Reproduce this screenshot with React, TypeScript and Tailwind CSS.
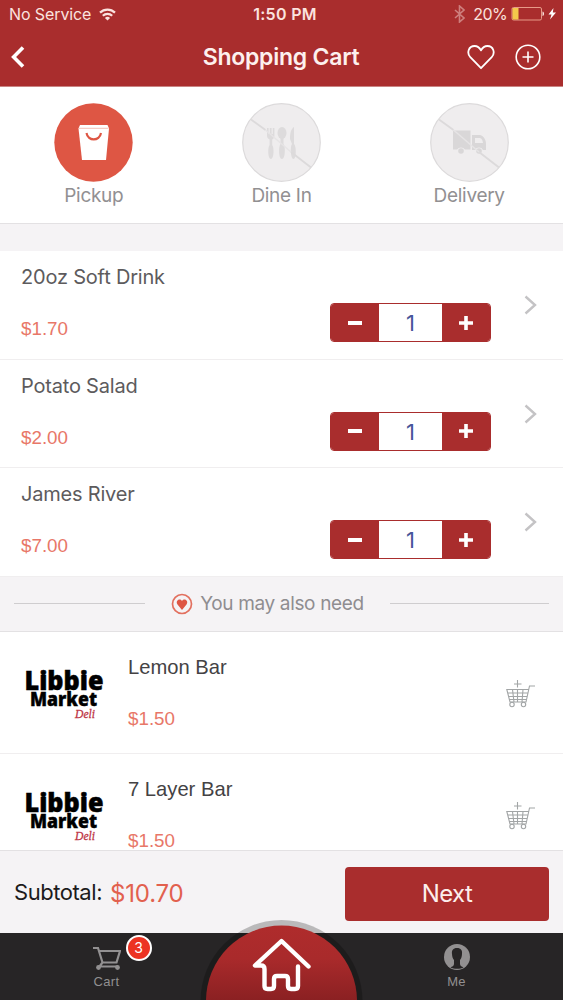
import { useState } from 'react'

const services = [
    { name: 'Pickup', enabled: true },
    { name: 'Dine In', enabled: false },
    { name: 'Delivery', enabled: false },
]

const initialItems = [
    { name: '20oz Soft Drink', price: '$1.70', qty: 1 },
    { name: 'Potato Salad', price: '$2.00', qty: 1 },
    { name: 'James River', price: '$7.00', qty: 1 },
]

const suggestions = [
    { name: 'Lemon Bar', price: '$1.50' },
    { name: '7 Layer Bar', price: '$1.50' },
]

function StatusBar() {
    return (
        <div className="grid h-7 grid-cols-3 items-center pr-1.5 pl-[9px] text-base text-[#fbe3df]">
            <div className="flex items-center gap-2">
                <span className="tracking-[-0.1px]">No Service</span>
                <svg width="17" height="13" viewBox="0 0 17 13" fill="none" stroke="currentColor" strokeWidth="2.2">
                    <path d="M1 4.6a10.8 10.8 0 0 1 15 0" />
                    <path d="M3.8 7.8a6.8 6.8 0 0 1 9.4 0" />
                    <path d="M8.5 12.6 5.9 9.9a3.8 3.8 0 0 1 5.2 0z" fill="currentColor" stroke="none" />
                </svg>
            </div>
            <span className="pl-1 text-center font-semibold tracking-[0.3px]">1:50 PM</span>
            <div className="flex items-center justify-end">
                <svg className="mr-2 opacity-45" width="11" height="18" viewBox="0 0 11 18" fill="none" stroke="currentColor" strokeWidth="1.6">
                    <path d="M1 5l9 8-4.5 4V1L10 5l-9 8" />
                </svg>
                <span className="tracking-[-0.6px]">20%</span>
                <svg className="ml-1" width="46" height="16" viewBox="0 0 46 16">
                    <rect x="1" y="1.5" width="29.5" height="12.5" rx="1.5" fill="none" stroke="#e79a88" />
                    <rect x="1.5" y="2" width="6" height="11.5" fill="#f3c94b" />
                    <path d="M31.5 5.5c2 .4 2 4.1 0 4.5z" fill="#fbe3df" />
                    <path d="M42.5 2 37.5 8.5h3L39 13.5l6-7h-3.2z" fill="#fff" />
                </svg>
            </div>
        </div>
    )
}

function Header() {
    return (
        <header className="h-[87px] shrink-0 border-b border-[#c98583] bg-[#a92d2d]">
            <StatusBar />
            <div className="flex h-[58px] items-center justify-between pr-[22px] pl-[11px]">
                <svg className="mr-[68px]" width="14" height="22" viewBox="0 0 14 22" fill="none" stroke="#fff" strokeWidth="3.6">
                    <path d="M12 1.5 2.6 11 12 20.5" />
                </svg>
                <h1 className="ml-0.5 text-[23px] leading-none font-semibold tracking-[-0.25px] text-[#fdf0ee]">Shopping Cart</h1>
                <div className="flex items-center justify-end gap-5">
                    <svg width="28" height="26" viewBox="0 0 28 26" fill="none" stroke="#fff" strokeWidth="1.8">
                        <path d="M14 24.2 3.3 13.2C-.5 9 1.5 2 7.6 2 11 2 13 4.5 14 6.4 15 4.5 17 2 20.4 2c6.1 0 8.1 7 4.3 11.2z" strokeLinejoin="round" />
                    </svg>
                    <svg width="26" height="26" viewBox="0 0 26 26" fill="none" stroke="#fff" strokeWidth="1.6">
                        <circle cx="13" cy="13" r="11.8" />
                        <path d="M13 7.5v11M7.5 13h11" />
                    </svg>
                </div>
            </div>
        </header>
    )
}

function ServiceIcon({ name }: { name: string }) {
    if (name === 'Pickup') {
        return (
            <svg width="79" height="79" viewBox="0 0 79 79">
                <circle cx="39.5" cy="39.5" r="39.2" fill="#de5644" />
                <path d="M24.5 25.5l1.5-3.5h27.5l1.5 3.5-3 31.500H28z" fill="#fff" />
                <path d="M25 25.3h29.5" stroke="#eeb0a6" strokeWidth=".8" />
                <path d="M32.5 30c1.5 8.5 13 8.5 14.5 0" fill="none" stroke="#de5644" strokeWidth="2.2" />
            </svg>
        )
    }
    return (
        <svg width="79" height="79" viewBox="0 0 79 79">
            <circle cx="39.5" cy="39.5" r="38.8" fill="#efedee" stroke="#dcdadb" strokeWidth="1.2" />
            {name === 'Dine In' ? (
                <g fill="#dddbdc">
                    <path d="M25 25h1.600v6h1.200v-6h1.800v6h1.200v-6h1.600v8c0 2-1.300 3-2.200 3.500v5.500c2 2 2 14-1.300 14s-3.300-12-1.300-14v-5.500c-1-.5-2.600-1.500-2.600-3.500z" />
                    <ellipse cx="40" cy="30" rx="4.5" ry="6" />
                    <path d="M38.5 35h3v6c2 2 2 15-1.5 15s-3.5-13-1.500-15z" />
                    <path d="M52 24v17c2.5 2 2.5 15-.5 15s-3.5-13-1.5-15l-2-5c0-6 1-10 4-12z" />
                </g>
            ) : (
                <g fill="#d9d7d8">
                    <path d="M23 27.5h17.5v19H35a5 5 0 0 0-8 0h-4z" />
                    <path d="M42 32h8c4 1 6 5 6 9v6h-3a4.500 4.500 0 0 0-8 0h-3zM45 35v5h8c-.5-4-2-5-4-5z" fillRule="evenodd" />
                    <circle cx="31" cy="48" r="2.8" />
                    <circle cx="49" cy="48" r="2.8" />
                </g>
            )}
            <path d="M9 16.5 23.5 27M49 49l20 15.5" stroke="#dcdadb" strokeWidth="1.8" />
            <path d="M23.5 27 49 49" stroke="#e6e4e5" strokeWidth="1.5" />
        </svg>
    )
}

interface QuantityProps {
    value: number
    onChange: (value: number) => void
}

function Quantity({ value, onChange }: QuantityProps) {
    return (
        <div className="flex h-[39px] w-[161px] overflow-hidden rounded border border-[#a92d2d] bg-white">
            <button className="flex w-12 items-center justify-center bg-[#a92d2d]" aria-label="Remove one" onClick={() => onChange(Math.max(0, value - 1))}>
                <span className="h-1 w-3.5 bg-white" />
            </button>
            <span className="flex-1 text-center text-[22px] leading-[38px] text-[#46569a]">{value}</span>
            <button className="flex w-12 items-center justify-center bg-[#a92d2d]" aria-label="Add one" onClick={() => onChange(value + 1)}>
                <svg width="14" height="14" viewBox="0 0 14 14" stroke="#fff" strokeWidth="3.6">
                    <path d="M7 0v14M0 7h14" />
                </svg>
            </button>
        </div>
    )
}

function MarketLogo() {
    return (
        <svg className="mt-[37px] shrink-0 overflow-visible" width="80" height="52" viewBox="0 0 80 52">
            <text x="0.5" y="21" textLength="79" lengthAdjust="spacingAndGlyphs" className="font-['Noto_Sans'] text-[26px] font-black" stroke="#000" strokeWidth=".5">Libbie</text>
            <text x="6" y="37" textLength="67" lengthAdjust="spacingAndGlyphs" className="font-['Noto_Sans'] text-[19px] font-black" stroke="#000" strokeWidth=".4">Market</text>
            <text x="51" y="49" textLength="20" lengthAdjust="spacingAndGlyphs" className="font-['Liberation_Serif'] text-[13px] italic" fill="#bd3444" stroke="#bd3444" strokeWidth=".3">Deli</text>
        </svg>
    )
}

function AddToCartIcon() {
    return (
        <svg width="29" height="28" viewBox="0 0 29 28" fill="none" stroke="#a2a5a6" strokeWidth="1.1">
            <path d="M11.5 0v7.5M8 4h7.5M29 6h-5.5L20 22H4L.8 9.5h22M2 13h20M3 16.5h18M3.5 19.5h17M6.5 9.5 8 22M11.5 9.5V22M17 9.5 16 22" />
            <circle cx="6" cy="24.5" r="2.2" />
            <circle cx="17.5" cy="24.5" r="2.2" />
        </svg>
    )
}

function TabBar() {
    return (
        <nav className="relative flex h-[67px] shrink-0 justify-between bg-[#272526] text-[#929091]">
            <div className="flex w-[213px] flex-col items-center pt-[13px]">
                <div className="relative">
                    <svg width="28" height="24" viewBox="0 0 28 24" fill="none" stroke="currentColor" strokeWidth="2.2">
                        <path d="M0 2h5l4.5 14.5h14L27 5H6M9.5 16.5 6.500 20.5H25" />
                        <circle cx="5.5" cy="21.5" r="2.4" fill="currentColor" stroke="none" />
                        <circle cx="24.5" cy="21.5" r="2.4" fill="currentColor" stroke="none" />
                    </svg>
                    <span className="absolute -top-[11px] left-[33px] flex size-[26px] items-center justify-center rounded-full border-2 border-white bg-[#ec3323] text-sm text-white">3</span>
                </div>
                <span className="mt-[3px] font-['Liberation_Sans',sans-serif] text-[13px] leading-[18px] tracking-[0.3px]">Cart</span>
            </div>
            <div className="flex w-[213px] flex-col items-center pt-[11px]">
                <svg width="26" height="26" viewBox="0 0 26 26">
                    <circle cx="13" cy="13" r="13" fill="#929091" />
                    <path d="M13 4c4 0 5.500 2.500 5 6-.1 3-1 5-2 6v4c0 2 2 2.500 3.500 3.500-3 1.800-10 1.800-13 0 1.500-1 3.500-1.500 3.500-3.500v-4c-1-1-1.900-3-2-6-.5-3.500 1-6 5-6z" fill="#272526" />
                </svg>
                <span className="mt-[3px] font-['Liberation_Sans',sans-serif] text-[13px] leading-[18px] tracking-[0.3px]">Me</span>
            </div>
            {/* Home button rises above the bar */}
            <svg className="absolute bottom-0 left-[200px]" width="164" height="81" viewBox="0 0 164 81">
                <defs>
                    <linearGradient id="home" x1="0" y1="0" x2="0" y2="1">
                        <stop offset="0" stopColor="#af2c2c" />
                        <stop offset=".22" stopColor="#a92a2b" />
                        <stop offset=".5" stopColor="#8a2022" />
                    </linearGradient>
                </defs>
                <circle cx="81.5" cy="82" r="81" fill="#000" fillOpacity=".24" />
                <circle cx="81.5" cy="82" r="75.5" fill="url(#home)" />
                <path d="M108.5 47.500 81.5 22 55 46.5h6c2.500 0 3.500 1 3.500 3.500v17c0 2 1 3 3 3h3.500c2 0 3-1 3-3V60c0-2 1-3 3-3h8c2 0 3 1 3 3v7c0 2 1 3 3 3H95c2 0 3-1 3-3V47.500" fill="none" stroke="#fff" strokeWidth="4.4" strokeLinecap="round" strokeLinejoin="round" />
            </svg>
        </nav>
    )
}

export default function App() {
    const [items, setItems] = useState(initialItems)

    const setQty = (name: string, qty: number) => {
        setItems(items.map((item) => (item.name === name ? { ...item, qty } : item)))
    }

    return (
        <div className="flex h-[1000px] w-[563px] flex-col overflow-hidden bg-[#f5f3f5] font-['Inter',sans-serif]">
            <Header />

            <section className="grid h-[137px] shrink-0 grid-cols-3 border-b border-[#e3e1e3] bg-white pt-4">
                {services.map((service) => (
                    <div key={service.name} className="flex flex-col items-center">
                        <ServiceIcon name={service.name} />
                        <span className="text-[19px] leading-7 tracking-[-0.3px] text-[#929092]">{service.name}</span>
                    </div>
                ))}
            </section>

            <section className="mt-[27px] shrink-0">
                {items.map((item) => (
                    <div key={item.name} className="flex h-[108.5px] border-b border-[#f0eeef] bg-white pl-[21px]">
                        <div className="flex-1 pt-3">
                            <h2 className="text-[20px] leading-7 tracking-[-0.2px] text-[#5d5b5d]">{item.name}</h2>
                            <p className="mt-6 font-['Liberation_Sans',sans-serif] text-[18.8px] leading-7 text-[#e87768]">{item.price}</p>
                        </div>
                        <div className="pt-[52px]">
                            <Quantity value={item.qty} onChange={(qty) => setQty(item.name, qty)} />
                        </div>
                        <svg className="mt-11 mr-[26px] ml-[33px]" width="13" height="20" viewBox="0 0 13 20" fill="none" stroke="#c4c3c5" strokeWidth="2.4">
                            <path d="M1.5 1.5 11 10l-9.5 8.5" />
                        </svg>
                    </div>
                ))}
            </section>

            <div className="flex h-[55px] shrink-0 items-center border-b border-[#e3e1e3] px-3.5">
                <div className="h-px w-[131px] bg-[#cfcdcf]" />
                <div className="flex flex-1 items-center justify-center gap-[7px]">
                    <svg width="22" height="22" viewBox="0 0 22 22">
                        <circle cx="11" cy="11" r="9.5" fill="none" stroke="#e2705f" strokeWidth="1.7" />
                        <path d="M11 17 6.5 11.5C4 8 8.5 4.5 11 8c2.5-3.5 7 0 4.5 3.5z" fill="#de5644" />
                    </svg>
                    <span className="pt-0.5 text-[19px] tracking-[-0.35px] text-[#8f8d90]">You may also need</span>
                </div>
                <div className="h-px w-[159px] bg-[#cfcdcf]" />
            </div>

            <section className="min-h-0 flex-1 overflow-hidden bg-white">
                {suggestions.map((item) => (
                    <div key={item.name} className="flex h-[122px] border-b border-[#f0eeef] pr-7 pl-6">
                        <MarketLogo />
                        <div className="ml-6 flex-1 pt-[21px] font-['Liberation_Sans',sans-serif]">
                            <h2 className="text-[20.2px] leading-7 text-[#444244]">{item.name}</h2>
                            <p className="mt-6 text-[18.8px] leading-7 text-[#e87768]">{item.price}</p>
                        </div>
                        <button className="self-start pt-12" aria-label={`Add ${item.name}`}>
                            <AddToCartIcon />
                        </button>
                    </div>
                ))}
            </section>

            <div className="flex h-[83px] shrink-0 items-center border-t border-[#e3e1e3] px-3.5 pt-1">
                <span className="pb-1 text-[22px] tracking-[-0.45px] text-[#1c1b1c]">Subtotal:</span>
                <span className="ml-2 flex-1 text-[24px] tracking-[-0.2px] text-[#e2604e]">$10.70</span>
                <button className="h-[54px] w-[204px] rounded bg-[#a92d2d] text-[24px] tracking-[-0.6px] text-[#fdeeec]">Next</button>
            </div>

            <TabBar />
        </div>
    )
}
